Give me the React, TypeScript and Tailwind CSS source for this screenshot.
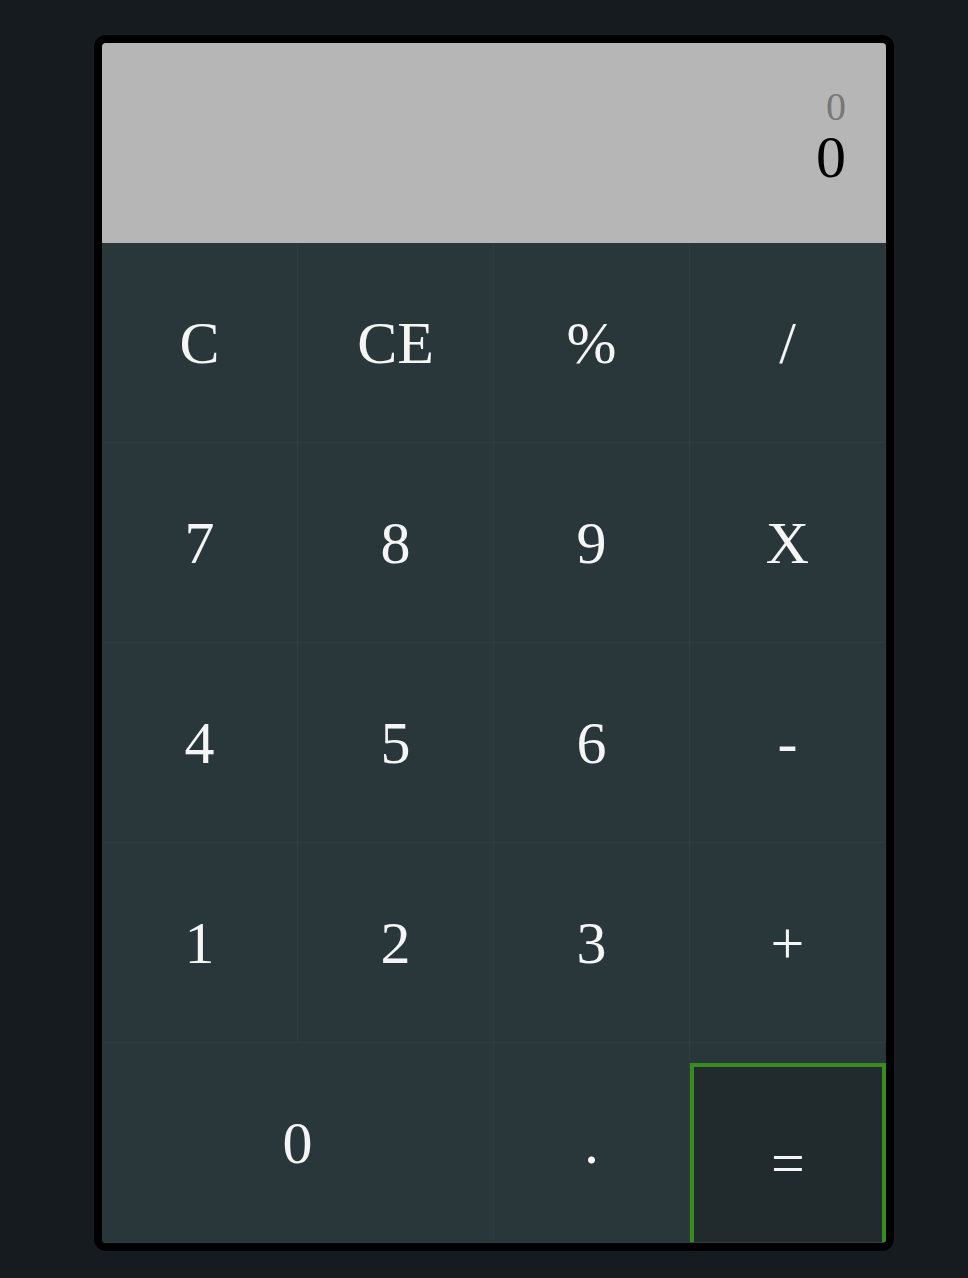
const rows: string[][] = [
  ['C', 'CE', '%', '/'],
  ['7', '8', '9', 'X'],
  ['4', '5', '6', '-'],
  ['1', '2', '3', '+'],
];

function Key({ label, wide }: { label: string; wide?: boolean }) {
  return (
    <button
      className={
        wide
          ? 'col-span-2 h-[200px] bg-[#29363a] border-r border-b border-[#303e3b] text-[60px] text-[#f5f5f5] flex items-center justify-center'
          : 'h-[200px] bg-[#29363a] border-r border-b border-[#303e3b] text-[60px] text-[#f5f5f5] flex items-center justify-center'
      }
    >
      {label}
    </button>
  );
}

export default function App() {
  return (
    <div className="min-h-[1278px] bg-[#161b1f] pl-[94px] pt-[35px] font-['Liberation_Serif',serif]">
      <div className="w-[800px] border-8 border-black rounded-[12px] overflow-hidden bg-[#29363a]">
        {/* Display */}
        <div className="h-[200px] bg-[#b6b6b6] pt-[42px] pr-[40px] text-right">
          <div className="text-[40px] leading-[44px] text-[#777777]">0</div>
          <div className="text-[60px] leading-[56px] text-black">0</div>
        </div>

        {/* Keys */}
        <div className="grid grid-cols-4">
          {rows.map((row) => row.map((k) => <Key key={k} label={k} />))}
          <Key label="0" wide />
          <Key label="." />
          <div className="h-[200px] bg-[#29363a] border-b border-[#303e3b] overflow-hidden">
            <button className="w-full h-full translate-y-[20px] bg-[#212a2d] border-4 border-[#3a8a22] text-[60px] text-[#f5f5f5] flex items-center justify-center">
              =
            </button>
          </div>
        </div>
      </div>
    </div>
  );
}
